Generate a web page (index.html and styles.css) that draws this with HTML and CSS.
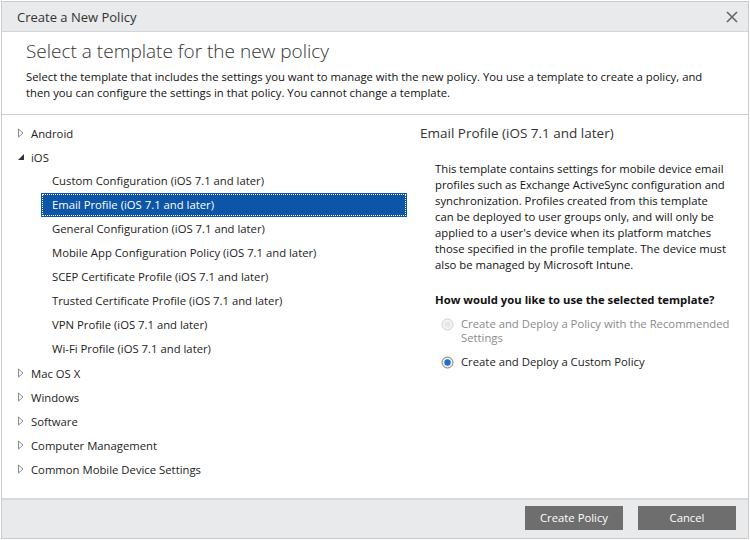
FILE: index.html
```html
<!DOCTYPE html>
<html>
<head>
<meta charset="utf-8">
<link rel="stylesheet" href="styles.css">
</head>
<body>
<div class="dialog">
  <div class="titlebar">
    <span class="title">Create a New Policy</span>
    <svg class="close" width="12" height="12" viewBox="0 0 12 12"><path d="M1 1 L11 11 M11 1 L1 11" stroke="#666" stroke-width="1.6" fill="none"/></svg>
  </div>
  <div class="header">
    <h1 class="heading">Select a template for the new policy</h1>
    <p class="intro">Select the template that includes the settings you want to manage with the new policy. You use a template to create a policy, and then you can configure the settings in that policy. You cannot change a template.</p>
  </div>
  <div class="body">
    <ul class="tree">
      <li class="node"><svg class="tri" width="8" height="10" viewBox="0 0 8 10"><path d="M1.5 1 L6 5 L1.5 9 Z" fill="none" stroke="#8a8a8a" stroke-width="1"/></svg><span>Android</span></li>
      <li class="node"><svg class="tri" width="8" height="10" viewBox="0 0 8 10"><path d="M7 2 L7 8 L1 8 Z" fill="#333"/></svg><span>iOS</span></li>
      <li class="leaf"><span>Custom Configuration (iOS 7.1 and later)</span></li>
      <li class="leaf selected"><span>Email Profile (iOS 7.1 and later)</span></li>
      <li class="leaf"><span>General Configuration (iOS 7.1 and later)</span></li>
      <li class="leaf"><span>Mobile App Configuration Policy (iOS 7.1 and later)</span></li>
      <li class="leaf"><span>SCEP Certificate Profile (iOS 7.1 and later)</span></li>
      <li class="leaf"><span>Trusted Certificate Profile (iOS 7.1 and later)</span></li>
      <li class="leaf"><span>VPN Profile (iOS 7.1 and later)</span></li>
      <li class="leaf"><span>Wi-Fi Profile (iOS 7.1 and later)</span></li>
      <li class="node"><svg class="tri" width="8" height="10" viewBox="0 0 8 10"><path d="M1.5 1 L6 5 L1.5 9 Z" fill="none" stroke="#8a8a8a" stroke-width="1"/></svg><span>Mac OS X</span></li>
      <li class="node"><svg class="tri" width="8" height="10" viewBox="0 0 8 10"><path d="M1.5 1 L6 5 L1.5 9 Z" fill="none" stroke="#8a8a8a" stroke-width="1"/></svg><span>Windows</span></li>
      <li class="node"><svg class="tri" width="8" height="10" viewBox="0 0 8 10"><path d="M1.5 1 L6 5 L1.5 9 Z" fill="none" stroke="#8a8a8a" stroke-width="1"/></svg><span>Software</span></li>
      <li class="node"><svg class="tri" width="8" height="10" viewBox="0 0 8 10"><path d="M1.5 1 L6 5 L1.5 9 Z" fill="none" stroke="#8a8a8a" stroke-width="1"/></svg><span>Computer Management</span></li>
      <li class="node"><svg class="tri" width="8" height="10" viewBox="0 0 8 10"><path d="M1.5 1 L6 5 L1.5 9 Z" fill="none" stroke="#8a8a8a" stroke-width="1"/></svg><span>Common Mobile Device Settings</span></li>
    </ul>
    <div class="details">
      <h2 class="details-title">Email Profile (iOS 7.1 and later)</h2>
      <p class="details-text">This template contains settings for mobile device email profiles such as Exchange ActiveSync configuration and synchronization. Profiles created from this template can be deployed to user groups only, and will only be applied to a user's device when its platform matches those specified in the profile template. The device must also be managed by Microsoft Intune.</p>
      <p class="question">How would you like to use the selected template?</p>
      <div class="option disabled">
        <svg class="radio" width="13" height="13" viewBox="0 0 13 13"><circle cx="6.5" cy="6.5" r="5.5" fill="#f4f4f4" stroke="#d0d0d0"/><circle cx="6.5" cy="6.5" r="3" fill="#e6e6e6"/></svg>
        <span>Create and Deploy a Policy with the Recommended Settings</span>
      </div>
      <div class="option">
        <svg class="radio" width="13" height="13" viewBox="0 0 13 13"><circle cx="6.5" cy="6.5" r="5.5" fill="#f0f0f0" stroke="#7a7a7a"/><circle cx="6.5" cy="6.5" r="3.2" fill="#1f6fc5"/></svg>
        <span>Create and Deploy a Custom Policy</span>
      </div>
    </div>
  </div>
  <div class="footer">
    <button class="btn">Create Policy</button>
    <button class="btn">Cancel</button>
  </div>
</div>
</body>
</html>
```
FILE: styles.css
```css
* { box-sizing: border-box; }
html, body { margin: 0; padding: 0; background: #fff; }
body { font-family: "Open Sans", "Noto Sans", sans-serif; color: #222; }
.dialog {
  margin: 1px;
  width: 748px;
  height: 538px;
  border: 1px solid #cbcbcb;
  display: flex;
  flex-direction: column;
  background: #fff;
}
.titlebar {
  height: 30px;
  background: #e9eaec;
  border-bottom: 1px solid #d4d4d4;
  display: flex;
  align-items: center;
  justify-content: space-between;
  padding: 0 10px 0 15px;
}
.title { font-size: 13px; color: #333; }
.close { display: block; }
.header {
  border-bottom: 1px solid #d0d0d0;
  padding: 6px 20px 13px 24px;
}
.heading {
  margin: 0;
  font-size: 19px;
  font-weight: 300;
  color: #333;
  line-height: 26px;
}
.intro {
  margin: 5px 0 0;
  font-size: 11.3px;
  line-height: 16px;
  color: #111;
}
.body { flex: 1; display: flex; }
.tree {
  list-style: none;
  margin: 0;
  padding: 6px 0 0 15px;
  width: 405px;
}
.tree li {
  height: 24px;
  display: flex;
  align-items: center;
  font-size: 11.3px;
  color: #222;
}
.tri { margin-right: 6px; flex: none; }
.leaf { padding-left: 24px; }
.leaf span { padding: 0 10px; line-height: 20px; border: 1px dotted transparent; flex: 1; }
.leaf.selected span {
  background: #0d55a6;
  color: #fff;
  border-color: #fff;
  outline: 1px solid #0d55a6;
  margin: 0 1px;
  padding: 0 9px;
}
.details { flex: 1; padding: 7px 19px 0 13px; }
.details-title {
  margin: 0;
  font-size: 13.5px;
  font-weight: 400;
  color: #333;
  line-height: 22px;
}
.details-text {
  margin: 17px 0 0 15px;
  font-size: 11.3px;
  line-height: 16px;
  color: #111;
}
.question {
  margin: 19px 0 0 15px;
  font-size: 11.3px;
  font-weight: 700;
  line-height: 16px;
  color: #111;
}
.option {
  display: flex;
  align-items: flex-start;
  margin: 9px -10px 0 21px;
  font-size: 11.3px;
  line-height: 14px;
  color: #222;
}
.option + .option { margin-top: 10px; }
.option .radio { flex: none; margin: 1px 7px 0 0; }
.option.disabled { color: #8a8a8a; }
.footer {
  height: 40px;
  background: #e9eaec;
  border-top: 2px solid #d8d8d8;
  display: flex;
  justify-content: flex-end;
  align-items: center;
  gap: 15px;
  padding: 0 12px 3px 0;
}
.btn {
  width: 98px;
  height: 24px;
  background: #6e6e6e;
  border: none;
  color: #fff;
  font-family: "Open Sans", "Noto Sans", sans-serif;
  font-size: 11.3px;
  padding: 0;
}
```
